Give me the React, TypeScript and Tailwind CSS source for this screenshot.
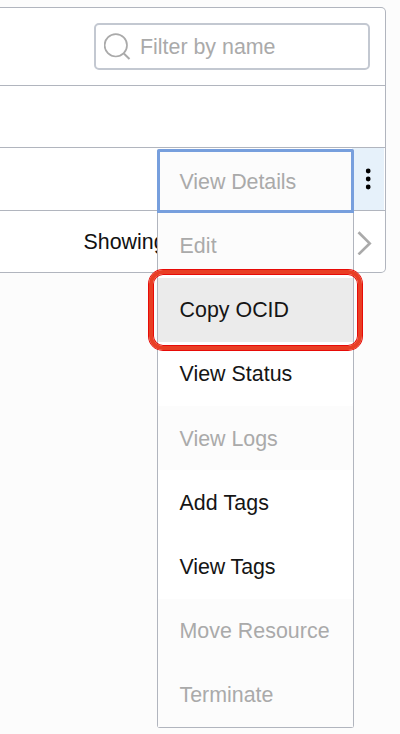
type Item = { label: string; disabled?: boolean; active?: boolean; layout: string };

const items: Item[] = [
  { label: 'Edit', disabled: true, layout: 'h-[65px] pt-[5px] border-b-3 border-white tracking-[0.1px]' },
  { label: 'Copy OCID', active: true, layout: 'h-[64px] pt-px tracking-[0.02px]' },
  { label: 'View Status', layout: 'h-[64px] pt-px tracking-[0.02px]' },
  { label: 'View Logs', disabled: true, layout: 'h-[64px] pt-[3px]' },
  { label: 'Add Tags', layout: 'h-[65px] pt-[2px] tracking-[0.1px]' },
  { label: 'View Tags', layout: 'h-[64px] pt-px tracking-[-0.1px]' },
  { label: 'Move Resource', disabled: true, layout: 'h-[64px] pt-px tracking-[0.02px]' },
  { label: 'Terminate', disabled: true, layout: 'h-[64px] pt-px' },
];

function MenuItem({ item }: { item: Item }) {
  const tone = item.active
    ? 'relative z-10 bg-[#ebebeb] text-[#151515]'
    : item.disabled
      ? 'bg-[#fcfcfc] text-[#aaaaaa]'
      : 'bg-white text-[#151515]';
  return (
    <li role="menuitem" className={`flex items-center pl-[21.5px] ${item.layout} ${tone}`}>
      {item.label}
      {item.active && (
        <span className="absolute -inset-x-[9px] -inset-y-[8px] rounded-[14px] border-4 border-[#e93e24] shadow-[0_0_0_1px_#e70b07,inset_0_0_0_1px_#e70b07]" />
      )}
    </li>
  );
}

export default function App() {
  return (
    <div className="relative h-[734px] w-[400px] overflow-hidden bg-[#fcfcfc] pt-[7px] font-['Liberation_Sans',Arial,sans-serif] text-[21.4px] leading-none whitespace-nowrap">
      <section className="flex h-[266px] w-[386px] flex-col rounded-r-[5px] border-y border-r border-[#b1b5be] bg-white">
        <div className="flex h-[78px] items-center justify-end border-b border-[#b1b5be] pr-[15px]">
          <div className="flex h-[47px] w-[276px] items-center rounded-[5px] border-2 border-[#c3c8d1] pl-2 text-[#aaaaaa]">
            <svg width="30" height="30" viewBox="0 0 30 30" fill="none" stroke="#aaaaaa" strokeWidth="1.7">
              <circle cx="11.8" cy="13.3" r="11.2" />
              <path d="M19.8 21.5 25.5 27" strokeWidth="2" />
            </svg>
            <span className="pt-[3px] pl-[6px]">Filter by name</span>
          </div>
        </div>
        <div className="h-[62px] border-b border-[#b1b5be]" />
        <div className="flex h-[63px] justify-end border-b border-[#b1b5be]">
          <button aria-label="Actions" className="mr-px flex w-[32px] items-center justify-center bg-[#e6f1fa]">
            <svg width="6" height="22" viewBox="0 0 6 22" fill="#000000">
              <circle cx="3.2" cy="3" r="2.4" />
              <circle cx="3.2" cy="11" r="2.4" />
              <circle cx="3.2" cy="19" r="2.4" />
            </svg>
          </button>
        </div>
        <div className="flex h-[61px] items-center justify-between pr-[13px] pl-[83.5px] text-[#111111]">
          <span className="pt-[2px]">Showing</span>
          <svg width="15" height="26" viewBox="0 0 15 26" fill="none" stroke="#aaaaaa" strokeWidth="2.7">
            <path d="M1.5 3.2 12.7 14.4 1.5 25.4" />
          </svg>
        </div>
      </section>

      <ul role="menu" className="absolute top-[149px] left-[157px] flex w-[197px] flex-col rounded-[3px] border-x border-b border-[#b1b5be] bg-white">
        <li role="menuitem" className="-mx-px flex h-[64px] items-center rounded-t-[2px] border-[3px] border-[#779fdd] bg-[#fcfcfc] pt-[3px] pl-[19.5px] tracking-[-0.05px] text-[#aaaaaa]">
          View Details
        </li>
        {items.map((item) => (
          <MenuItem key={item.label} item={item} />
        ))}
      </ul>
    </div>
  );
}
